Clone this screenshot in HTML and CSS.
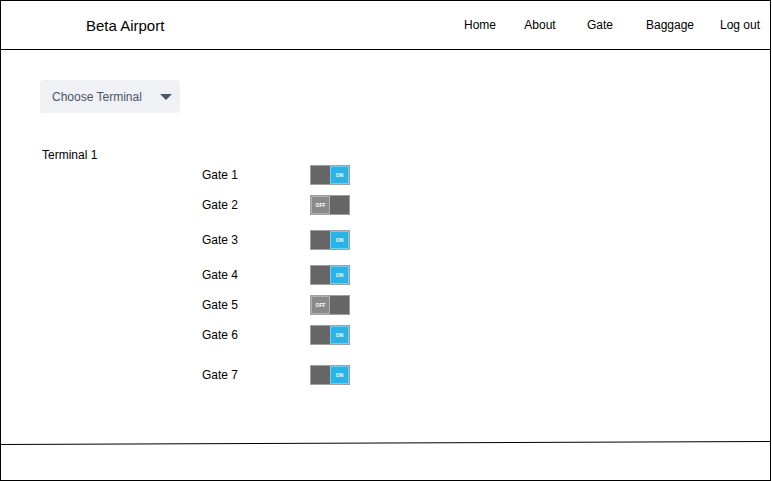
FILE: index.html
```html
<!DOCTYPE html>
<html>
<head>
<meta charset="utf-8">
<title>Beta Airport</title>
<link rel="stylesheet" href="styles.css">
</head>
<body>
<div class="frame">
  <header class="header">
    <div class="brand">Beta Airport</div>
    <nav class="nav">
      <a class="nav-link">Home</a>
      <a class="nav-link">About</a>
      <a class="nav-link">Gate</a>
      <a class="nav-link">Baggage</a>
      <a class="nav-link">Log out</a>
    </nav>
  </header>
  <main class="main">
    <div class="select">
      <span class="select-text">Choose Terminal</span>
      <span class="caret"></span>
    </div>
    <div class="terminal-label">Terminal 1</div>
    <div class="gates">
      <div class="gate-row"><span class="gate-name">Gate 1</span><span class="toggle on"><span class="knob">ON</span></span></div>
      <div class="gate-row gap-10"><span class="gate-name">Gate 2</span><span class="toggle off"><span class="knob">OFF</span></span></div>
      <div class="gate-row gap-15"><span class="gate-name">Gate 3</span><span class="toggle on"><span class="knob">ON</span></span></div>
      <div class="gate-row gap-15"><span class="gate-name">Gate 4</span><span class="toggle on"><span class="knob">ON</span></span></div>
      <div class="gate-row gap-10"><span class="gate-name">Gate 5</span><span class="toggle off"><span class="knob">OFF</span></span></div>
      <div class="gate-row gap-10"><span class="gate-name">Gate 6</span><span class="toggle on"><span class="knob">ON</span></span></div>
      <div class="gate-row gap-20"><span class="gate-name">Gate 7</span><span class="toggle on"><span class="knob">ON</span></span></div>
    </div>
  </main>
  <footer class="footer">
    <svg class="footer-line" width="769" height="4" viewBox="0 0 769 4" preserveAspectRatio="none">
      <line x1="0" y1="3.5" x2="769" y2="0.5" stroke="#000" stroke-width="1"/>
    </svg>
    <div class="footer-body"></div>
  </footer>
</div>
</body>
</html>
```

FILE: styles.css
```css
* { box-sizing: border-box; }
html, body { margin: 0; padding: 0; background: #fff; }
body {
  font-family: "Liberation Sans", Arial, Helvetica, sans-serif;
  color: #000;
}
.frame {
  width: 771px;
  height: 481px;
  border: 1px solid #000;
  display: flex;
  flex-direction: column;
}
.header {
  height: 49px;
  flex: none;
  border-bottom: 1px solid #000;
  display: flex;
  align-items: center;
  justify-content: space-between;
  padding-left: 85px;
}
.brand {
  font-size: 15px;
  line-height: 18px;
  margin-top: 2px;
}
.nav {
  display: grid;
  grid-template-columns: 60px 60px 60px 80px 60px;
  margin-right: 0;
}
.nav-link {
  font-size: 12px;
  line-height: 14px;
  text-align: center;
  color: #000;
  text-decoration: none;
  margin-top: 0;
}
.main {
  flex: 1;
  padding: 30px 0 0 39px;
}
.select {
  width: 140px;
  height: 33px;
  background: #eff1f5;
  border-radius: 4px;
  display: flex;
  align-items: center;
  justify-content: space-between;
  padding: 0 7px 0 12px;
}
.select-text {
  font-size: 12px;
  color: #4a5568;
}
.caret {
  width: 0;
  height: 0;
  border-left: 6px solid transparent;
  border-right: 6px solid transparent;
  border-top: 6px solid #4a5568;
  margin-right: 1px;
}
.terminal-label {
  margin-top: 35px;
  margin-left: 2px;
  font-size: 12px;
  line-height: 14px;
}
.gates {
  margin-top: 3px;
  margin-left: 162px;
}
.gate-row {
  height: 20px;
  display: grid;
  grid-template-columns: 108px 40px;
  align-items: center;
}
.gap-10 { margin-top: 10px; }
.gap-15 { margin-top: 15px; }
.gap-20 { margin-top: 20px; }
.gate-name {
  font-size: 12px;
  line-height: 14px;
}
.toggle {
  width: 40px;
  height: 20px;
  background: #666;
  border: 1px solid #a0a0a0;
  display: flex;
  align-items: center;
}
.toggle.on { justify-content: flex-end; }
.toggle.off { justify-content: flex-start; }
.knob {
  width: 19px;
  height: 18px;
  display: flex;
  align-items: center;
  justify-content: center;
  font-size: 5px;
  font-weight: bold;
  color: #fff;
  font-family: "Liberation Sans", Arial, sans-serif;
}
.toggle.on .knob {
  background: #2bb3e6;
  border: 1px solid #6fd0f2;
}
.toggle.off .knob {
  background: #8a8a8a;
  border: 1px solid #b0b0b0;
}
.footer {
  flex: none;
  height: 39px;
}
.footer-line {
  display: block;
}
.footer-body {
  height: 35px;
}
```
